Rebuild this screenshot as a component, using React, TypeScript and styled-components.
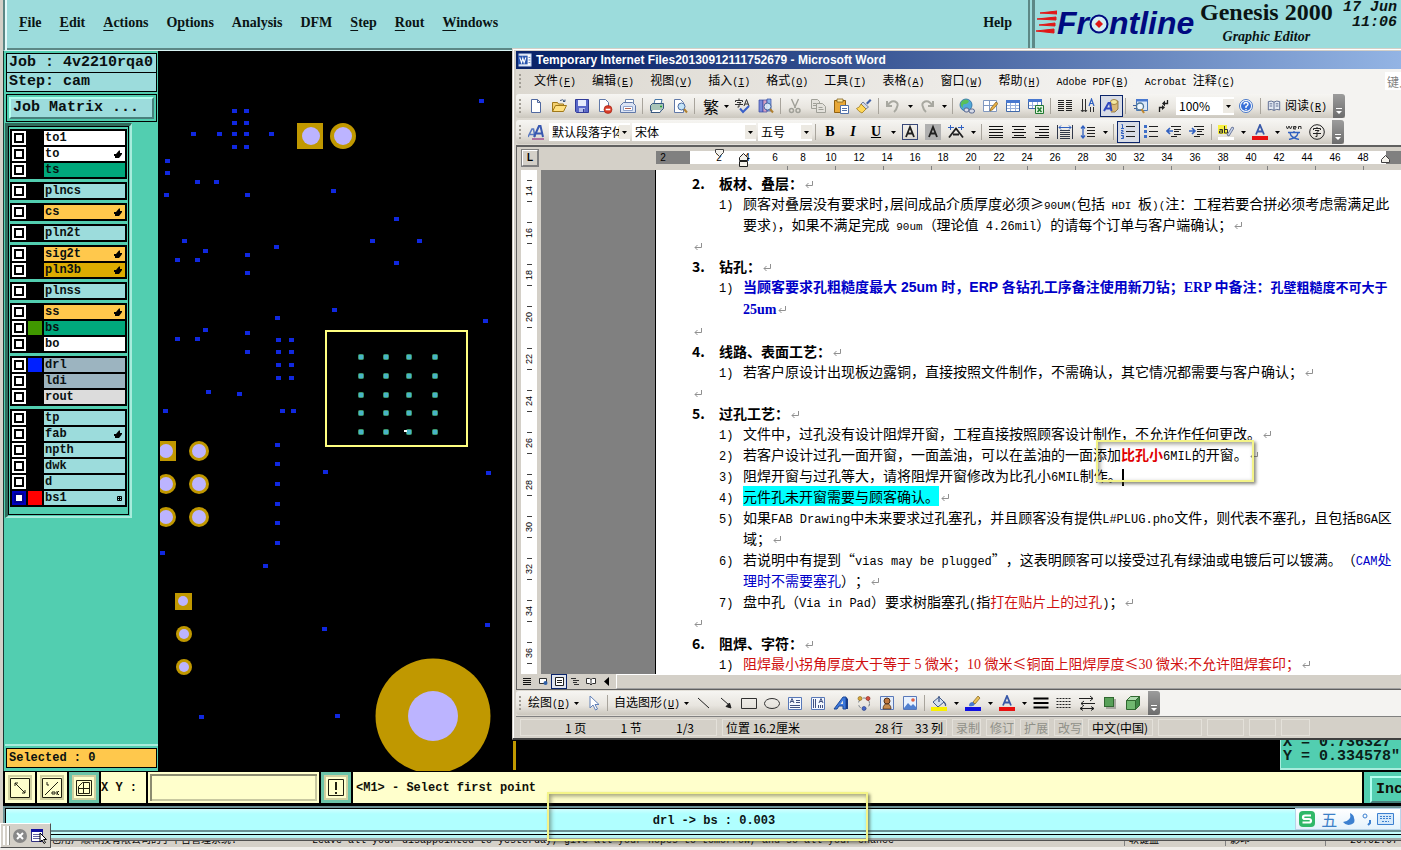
import React from "react";
import styled, { createGlobalStyle, css } from "styled-components";

const MONO = '"Liberation Mono", monospace';
const SERIF = '"Liberation Serif", "Noto Sans CJK SC", serif';
const CJK = '"Noto Sans CJK SC", sans-serif';

const teal = "#52ceb0";
const aqua = "#9cdcdc";
const cream = "#ffffcc";
const face = "#d4d0c8";

const Global = createGlobalStyle`
  * { box-sizing: border-box; }
  body { margin: 0; background: ${face}; font-family: ${CJK}; text-spacing-trim: space-all; overflow: hidden; }
  button, input, select { font: inherit; color: inherit; margin: 0; padding: 0; border: 0; border-radius: 0; background: none; }
  svg { display: block; flex: none; }
`;

/* ---------- Genesis shell ---------- */

const Shell = styled.div`
  position: relative;
  display: flex;
  flex-direction: column;
  min-height: 100vh;
  overflow: hidden;
`;

const Header = styled.header`
  display: flex;
  height: 51px;
  margin-left: 3px;
  background: ${aqua};
  border-left: 2px solid #5c8886;
  border-bottom: 1px solid #d8f4f4;
  box-shadow: inset 2px 0 #e4fafa, inset 0 -2px #5c8886;
`;

const MainMenu = styled.nav`
  flex: 1;
  display: flex;
  align-items: center;
  gap: 18px;
  padding: 0 16px 5px 14px;
  font: bold 14px/20px ${SERIF};
  color: #0a1414;
`;

const MenuItem = styled.button<{ $end?: boolean }>`
  margin-left: ${(p) => (p.$end ? "auto" : 0)};
  u {
    text-underline-offset: 3px;
  }
`;

const Brand = styled.div`
  display: flex;
  width: 373px;
  border-left: 2px solid #5c8886;
  box-shadow: inset 2px 0 ${aqua}, inset 5px 0 #5c8886;
  padding-left: 6px;
`;

const Logo = styled.div`
  display: flex;
  align-items: center;
  height: 46px;
  font: italic bold 32px/40px "Liberation Sans", sans-serif;
  color: #000a80;
`;

const Product = styled.div`
  width: 136px;
  margin-left: 4px;
  text-align: center;
  white-space: nowrap;
  color: #0a1414;
  font: bold 24px/24px ${SERIF};
  em {
    display: block;
    font-size: 14px;
    line-height: 26px;
  }
`;

const Clock = styled.time`
  margin-left: auto;
  padding-right: 4px;
  text-align: right;
  white-space: pre;
  font: italic bold 15px/15px ${MONO};
  color: #0a1414;
`;

const Main = styled.main`
  position: relative;
  flex: 1;
  display: flex;
  margin-left: 3px;
`;

const Side = styled.aside`
  display: flex;
  flex-direction: column;
  width: 155px;
  padding: 2px 1px 3px 2px;
  background: ${teal};
  border-left: 1px solid #1a3a34;
  color: #0a1010;
`;

const SideField = styled.div<{ $gold?: boolean }>`
  height: 20px;
  flex: none;
  border: 1px solid #000;
  margin-top: -1px;
  padding-left: 2px;
  white-space: pre;
  background: ${(p) => (p.$gold ? "#ffc84c" : aqua)};
  font: bold ${(p) => (p.$gold ? "12px" : "15px")} / 18px ${MONO};
  &:first-child {
    margin-top: 0;
  }
`;

const MatrixFrame = styled.div`
  margin-top: 2px;
  border: 1px solid #000;
  padding: 2px;
`;

const bevel = css`
  border: 2px solid;
  border-color: #b4fff0 #48807c #48807c #b4fff0;
`;

const MatrixButton = styled.button`
  ${bevel}
  display: block;
  width: 100%;
  height: 22px;
  padding-left: 2px;
  text-align: left;
  background: ${aqua};
  font: bold 15px/16px ${MONO};
`;

const LayerPanel = styled.div`
  display: flex;
  flex-direction: column;
  gap: 3px;
  width: 127px;
  margin: 1px 0 0 -1px;
  padding: 3px 3px 9px 2px;
  border-style: solid;
  border-width: 3px 2px 2px 3px;
  border-color: #306b5c #a8ecdc #a8ecdc #306b5c;
  outline: 1px solid #000;
  outline-offset: -4px;
`;

const LayerGroup = styled.div`
  display: flex;
  flex-direction: column;
  gap: 2px;
  padding: 2px;
  background: #000;
`;

const LayerRow = styled.label`
  display: grid;
  grid-template-columns: 14px 14px 1fr;
  gap: 2px;
  height: 14px;
`;

const LayerCheck = styled.input<{ $active?: boolean }>`
  appearance: none;
  width: 14px;
  height: 14px;
  border: 2px solid ${(p) => (p.$active ? "#0000c0" : "#fff")};
  background: #fff;
  box-shadow: inset 0 0 0 2px ${(p) => (p.$active ? "#000090" : "#000")};
`;

const Swatch = styled.span<{ $c: string }>`
  background: ${(p) => p.$c};
`;

const LayerName = styled.span<{ $c: string }>`
  display: flex;
  align-items: center;
  justify-content: space-between;
  padding: 0 3px 0 1px;
  background: ${(p) => p.$c};
  font: bold 12px/13px ${MONO};
`;

const Spacer = styled.div`
  flex: 1;
  margin: 0 -1px 3px -1px;
  border-bottom: 2px solid #a8ecdc;
`;

const Canvas = styled.section`
  flex: 1;
  position: relative;
  background: #000;
  overflow: hidden;
`;

const Board = styled.svg`
  width: 100%;
  height: 100%;
  position: absolute;
  inset: 0;
`;

const Coords = styled.output`
  position: absolute;
  right: 0;
  bottom: 1px;
  width: 121px;
  padding: 0 0 4px 2px;
  background: ${teal};
  border-left: 1px solid #a8ecdc;
  border-bottom: 2px solid #a8ecdc;
  white-space: pre;
  font: bold 15px/14px ${MONO};
  color: #0a2018;
`;

const Prompt = styled.form`
  display: flex;
  height: 35px;
  margin-left: 3px;
  padding: 1px 0 3px 2px;
  gap: 2px;
  background: #000;
  font: bold 12px/32px ${MONO};
  color: #101008;
`;

const ToolButton = styled.button<{ $on?: boolean }>`
  width: 30px;
  display: grid;
  place-items: center;
  background: ${cream};
  border: 3px solid ${(p) => (p.$on ? "#6cc4a8" : cream)};
  box-shadow: inset 0 0 0 2px #d0d0a0;
`;

const PromptLabel = styled.label`
  display: flex;
  gap: 2px;
  span {
    width: 45px;
    background: ${cream};
  }
`;

const CoordInput = styled.input`
  width: 171px;
  background: ${cream};
  border: 2px solid ${cream};
  box-shadow: inset 2px 2px #8c8c70, inset -2px -2px #c8c8a0;
  padding-left: 4px;
`;

const Message = styled.output`
  flex: 1;
  padding-left: 3px;
  background: ${cream};
`;

const IncFrame = styled.div`
  width: 37px;
  padding: 2px 0 2px 6px;
  background: ${teal};
  overflow: hidden;
`;

const IncButton = styled.button`
  ${bevel}
  width: 70px;
  height: 27px;
  padding-left: 4px;
  text-align: left;
  background: ${teal};
  font: bold 15px/23px ${MONO};
`;

const Status = styled.footer`
  position: relative;
  height: 34px;
  margin-left: 3px;
  padding-top: 2px;
  background: #6b9094;
`;

const StatusText = styled.output`
  display: block;
  height: 22px;
  margin-left: 2px;
  padding-left: 21px;
  border-top: 1px solid #000;
  border-left: 1px solid #000;
  background: linear-gradient(#d0ffff, #b0ffff 5px);
  text-align: center;
  font: bold 12px/24px ${MONO};
  color: #0a1414;
`;

const StatusEdge = styled.div`
  height: 8px;
  margin-top: 2px;
  border-top: 2px solid #c8ffff;
  background: linear-gradient(#000 1px, #b8f4f4 1px, #b8f4f4 4px, #a0a8a8 4px);
`;

const Mark = styled.div`
  position: absolute;
  z-index: 5;
  border: 2px solid #f4f488;
  box-shadow: 2px 2px 3px rgba(60, 60, 40, 0.6), inset 2px 2px 4px rgba(60, 60, 40, 0.5);
  pointer-events: none;
`;

const StatusMark = styled(Mark)`
  left: 544px;
  top: -14px;
  width: 321px;
  height: 49px;
`;

const Taskbar = styled.div`
  display: flex;
  height: 10px;
  border-top: 1px solid #505050;
  background: linear-gradient(${face} 6px, #f0eeea 6px);
  white-space: nowrap;
  font: 10px/11px ${MONO}, ${CJK};
`;

const TaskCell = styled.div<{ $w?: number; $pad?: number }>`
  ${(p) => (p.$w ? `flex: none; width: ${p.$w}px;` : "flex: 1;")}
  display: flex;
  gap: 75px;
  align-items: flex-end;
  height: 5px;
  padding-left: ${(p) => p.$pad ?? 4}px;
  overflow: hidden;
  border-left: 1px solid #808080;
  &:first-child {
    border-left: 0;
  }
`;

const Dock = styled.div`
  position: absolute;
  left: 0;
  bottom: 2px;
  z-index: 6;
  display: flex;
  align-items: center;
  gap: 3px;
  width: 51px;
  height: 25px;
  padding-left: 2px;
  background: ${face};
  border: 1px solid;
  border-color: #fff #505050 #505050 #fff;
`;

const DockGrip = styled.i`
  width: 6px;
  height: 19px;
  border: solid #fff;
  border-width: 0 2px;
  box-shadow: 1px 0 #909088;
`;

const Ime = styled.div`
  position: absolute;
  right: 0;
  bottom: 20px;
  z-index: 6;
  display: flex;
  align-items: center;
  justify-content: space-between;
  width: 106px;
  height: 22px;
  padding: 0 6px 0 2px;
  background: linear-gradient(#fff, #e4f2fc);
  border: 1px solid #b8d4e8;
  color: #3c80c8;
  font: 16px/18px ${CJK};
`;

/* ---------- Word window ---------- */

const Word = styled.section`
  position: absolute;
  left: 512px;
  right: 0;
  top: 48px;
  z-index: 3;
  background: ${face};
  border-top: 1px solid ${face};
  border-left: 1px solid ${face};
  border-bottom: 2px solid #404040;
  box-shadow: inset 1px 1px #fff;
  padding: 2px 0 0 3px;
  overflow: hidden;
  color: #000;
  font: 12px/16px ${CJK};
`;

const TitleBar = styled.h1`
  display: flex;
  align-items: center;
  gap: 4px;
  height: 18px;
  margin: 0;
  padding-left: 2px;
  background: linear-gradient(90deg, #0a246a, #0a246a 60px, #93b4e4);
  color: #fff;
  white-space: nowrap;
  font: bold 12px/18px "Liberation Sans", sans-serif;
`;

const barBg = "linear-gradient(90deg, #dcd8d0, #f4f3f1 70%)";

const WordMenu = styled.nav`
  display: flex;
  align-items: center;
  gap: 16px;
  height: 24px;
  padding-left: 3px;
  background: ${barBg};
  white-space: nowrap;
`;

const WordMenuItem = styled.button`
  flex: none;
  line-height: 16px;
`;

const Small = styled.span`
  font: 10px/14px ${MONO};
`;

const AskBox = styled.input`
  flex: none;
  width: 130px;
  height: 18px;
  margin: 0 -114px 0 auto;
  padding-left: 2px;
  background: #fff;
  &::placeholder {
    color: #808080;
    opacity: 1;
  }
`;

const BarRow = styled.div`
  display: flex;
  align-items: center;
  height: 26px;
  background: ${barBg};
`;

const Bar = styled.div`
  display: flex;
  align-items: center;
  height: 24px;
  padding-left: 3px;
  background: linear-gradient(#f6f5f2, #e8e5df 60%, #cbc7be);
  border-radius: 3px 0 0 3px;
  white-space: nowrap;
`;

const Grip = styled.i`
  width: 6px;
  height: 15px;
  background: radial-gradient(circle at 1px 1px, #a09c94 1px, transparent 1px) 0 0 / 6px 4px;
`;

const MenuGrip = styled(Grip)`
  margin-right: -7px;
`;

const IconButton = styled.button<{ $on?: boolean }>`
  flex: none;
  width: 23px;
  height: 22px;
  display: grid;
  align-items: center;
  padding-left: 3px;
  ${(p) => p.$on && "box-shadow: inset 0 0 0 1px #0a246a; background: #d8dce6;"}
`;

const Drop = styled.button`
  flex: none;
  width: 11px;
  height: 22px;
  display: grid;
  place-items: center;
`;

const Sep = styled.i`
  flex: none;
  width: 1px;
  height: 16px;
  margin: 0 3px 0 2px;
  background: #a8a49c;
`;

const TextButton = styled.button`
  display: flex;
  align-items: center;
  gap: 4px;
  height: 22px;
  padding: 0 3px;
`;

const Cap = styled.button`
  width: 12px;
  height: 24px;
  margin-left: 3px;
  display: grid;
  place-items: end center;
  padding-bottom: 3px;
  background: linear-gradient(#9c9c9c, #6c6c6c);
  border-radius: 0 3px 3px 0;
`;

const Combo = styled.label<{ $w: number }>`
  flex: none;
  display: grid;
  grid-template-columns: 1fr 11px;
  align-items: center;
  width: ${(p) => p.$w}px;
  height: 18px;
  margin: 0 1px;
  background: #fff;
  select {
    grid-area: 1 / 1 / 2 / 3;
    appearance: none;
    width: 100%;
    height: 18px;
    padding-left: 3px;
    line-height: 16px;
  }
  i {
    grid-area: 1 / 2;
    height: 14px;
    display: grid;
    place-items: center;
    background: #ece9e2;
    pointer-events: none;
  }
`;

const RulerRow = styled.div`
  display: flex;
  align-items: flex-start;
  height: 25px;
  border-top: 2px solid #606060;
  border-left: 1px solid #606060;
  font: 10px/14px "Liberation Sans", sans-serif;
`;

const TabStop = styled.button`
  width: 16px;
  height: 16px;
  margin: 3px 0 0 5px;
  border: 1px solid;
  border-color: #fff #808080 #808080 #fff;
  outline: 1px solid #808080;
  font: bold 10px/12px "Liberation Sans", sans-serif;
`;

const RulerBody = styled.div`
  flex: 1;
  margin-left: 118px;
  padding-top: 4px;
  position: relative;
`;

const RulerScale = styled.div`
  display: flex;
  height: 13px;
  background: linear-gradient(90deg, #808080 34px, #fff 34px);
  span {
    flex: none;
    width: 28px;
    text-align: center;
  }
  span:first-child {
    width: 49px;
    padding-right: 35px;
  }
  i {
    flex: 1;
    margin-left: 9px;
    background: #808080;
  }
`;

const RulerTicks = styled.div`
  height: 4px;
  margin: 2px 30px 0 131px;
  background: repeating-linear-gradient(90deg, #808080 0 1px, transparent 1px 48px);
`;

const IndentMarks = styled.svg`
  position: absolute;
  left: 56px;
  top: 1px;
`;

const RightMark = styled.svg`
  position: absolute;
  right: 10px;
  top: 8px;
`;

const Doc = styled.div`
  display: flex;
  border-left: 1px solid #606060;
`;

const VRuler = styled.div`
  display: flex;
  flex-direction: column;
  width: 16px;
  margin: 0 4px;
  background: #fff;
  font: 9px/12px "Liberation Sans", sans-serif;
  div {
    flex: 1;
    display: flex;
    flex-direction: column;
    align-items: center;
    justify-content: center;
    gap: 5px;
  }
  span {
    writing-mode: vertical-rl;
    transform: rotate(180deg);
  }
  i {
    width: 5px;
    height: 1px;
    background: #404040;
  }
`;

const Gutter = styled.div`
  width: 115px;
  background: #808080;
  border-right: 1px solid #000;
`;

const Page = styled.article`
  position: relative;
  flex: 1;
  padding: 3px 0 0 36px;
  background: #fff;
  white-space: nowrap;
  font: 14px/21px ${CJK};
`;

const Heading = styled.h2`
  display: grid;
  grid-template-columns: 27px auto;
  height: 20px;
  margin: 0;
  font: bold 14px/20px ${CJK};
`;

const Item = styled.div`
  display: grid;
  grid-template-columns: 24px auto;
  align-items: baseline;
  padding-left: 27px;
`;

const Blank = styled.p`
  height: 21px;
  margin: 0;
`;

const Latin = styled.span`
  font: 12px/14px ${MONO};
`;

const Narrow = styled.span`
  font: 11px/14px ${MONO};
`;

const Times = styled.span`
  font: 14px/14px ${SERIF};
`;

const HalfWidth = styled.span`
  font-feature-settings: "halt";
`;

const Ink = styled.span<{ $c: string; $bold?: boolean }>`
  color: ${(p) => p.$c};
  font-weight: ${(p) => (p.$bold ? "bold" : "inherit")};
`;

const ArialBold = styled.span`
  color: #0000c8;
  font-family: "Liberation Sans", ${CJK};
  font-weight: bold;
`;

const SerifBold = styled.span`
  color: #0000c8;
  font-family: ${SERIF};
  font-weight: bold;
`;

const Script = styled.span`
  font-size: 13px;
  line-height: 14px;
`;

const Lit = styled.span`
  background: #00ffff;
`;

const Caret = styled.i`
  display: inline-block;
  width: 2px;
  height: 17px;
  vertical-align: middle;
  background: #000;
`;

const DocMark = styled(Mark)`
  left: 440px;
  top: 270px;
  width: 158px;
  height: 42px;
`;

const Ret = styled.svg`
  display: inline-block;
  margin-left: 2px;
`;

const ViewRow = styled.div`
  display: flex;
  align-items: center;
  height: 16px;
  border-left: 1px solid #606060;
  border-bottom: 1px solid #606060;
  padding-left: 2px;
`;

const ViewButton = styled.button<{ $on?: boolean }>`
  width: 16px;
  height: 15px;
  display: grid;
  align-items: center;
  padding-left: 3px;
  ${(p) => p.$on && "box-shadow: inset 0 0 0 1px #0a246a; background: #e0e4ee;"}
`;

const ScrollThumb = styled.div`
  flex: 1;
  height: 15px;
  margin-left: 1px;
  border: 1px solid;
  border-color: #fff ${face} #a0a0a0 #fff;
`;

const WordStatus = styled.div`
  display: flex;
  align-items: center;
  gap: 5px;
  height: 22px;
  padding-left: 4px;
  border-top: 1px solid #808080;
`;

const StatusCell = styled.div<{ $w: number; $off?: boolean }>`
  display: flex;
  flex: none;
  width: ${(p) => p.$w}px;
  height: 17px;
  justify-content: space-between;
  padding: 0 3px;
  border: 1px solid #e4e1da;
  line-height: 15px;
  white-space: nowrap;
  color: ${(p) => (p.$off ? "#909088" : "#000")};
`;

const PageCell = styled(StatusCell)`
  padding: 0 22px 0 44px;
`;

/* ---------- drawings ---------- */

const G: Record<string, React.ReactNode> = {
  word: (<><rect x="1" y="1" width="14" height="14" fill="#fff" stroke="#9cb4e0" /><rect x="0" y="3" width="11" height="10" fill="#2a56b0" /><path d="M2 5l2 6 1.500-5 1.500 5 2-6" stroke="#fff" fill="none" strokeWidth="1.300" /><path d="M12 5h2M12 8h2M12 11h2" stroke="#5070b0" /></>),
  new: <path d="M3.500 1.500h6l3 3v10h-9zM9.500 1.500v3h3" fill="#fff" stroke="#5068a0" />,
  open: (<><path d="M1.500 13.500v-9h5l1 1.500h5v2" fill="#f4d070" stroke="#a07818" /><path d="M1.500 13.500l3-6h11l-3 6z" fill="#ffe080" stroke="#a07818" /><path d="M9 2.500q3-2 5 1m0-2v2h-2" stroke="#405880" fill="none" /></>),
  save: (<><path d="M1.500 1.500h13v13h-12l-1-1z" fill="#5a68c8" stroke="#303a98" /><path d="M4 2h8v6H4z" fill="#e8ecfc" /><path d="M5 10h6v4H5z" fill="#b8c0ec" /><path d="M9 11h1.500v3H9z" fill="#303a98" /></>),
  perm: (<><path d="M2.500 1.500h6l3 3v9h-9z" fill="#fff" stroke="#6078a8" /><circle cx="11" cy="11.500" r="4" fill="#d83c28" stroke="#a02010" strokeWidth=".6" /><path d="M8.700 11.500h4.600" stroke="#fff" strokeWidth="1.600" /></>),
  mail: (<><path d="M5.500 5V1.500h8V9" fill="#fff" stroke="#7088b0" /><path d="M.5 7.500l3-3h9l3 3v7H.5z" fill="#dce4f4" stroke="#6078a8" /><path d="M3.500 8.500h9v4h-9z" fill="#fff" stroke="#90a4cc" /><path d="M5 10.500h6" stroke="#b06050" /></>),
  print: (<><path d="M5 6l1-4.500h7L12 6" fill="#fff" stroke="#4878a8" /><path d="M1.500 7.500l2-2h11v5l-2 2h-11z" fill="#a8c4b8" stroke="#385880" /><path d="M3 12l-1 2.500h9l1.500-2.500" fill="#fff" stroke="#385880" /><path d="M11 8.500h2" stroke="#20a030" strokeWidth="1.500" /></>),
  preview: (<><path d="M2.500 1.500h6l3 3v10h-9z" fill="#fff" stroke="#6078a8" /><circle cx="9.500" cy="8.500" r="3.500" fill="#c4e4f8" stroke="#4868a0" /><path d="M12 11l3 3.500" stroke="#b08030" strokeWidth="2" /></>),
  spell: (<><path d="M.5 4V2.500h7V4M4 .500v2M2 4.500h4L4 6.500V9H2.500M0 6.500h8M9 8l2.500-6.500L14 8M10 6h3" stroke="#303030" fill="none" /><path d="M5 10.500l3 3.500 6-6" stroke="#3a60c8" fill="none" strokeWidth="2" /></>),
  research: (<><path d="M1 2h4v12H1z" fill="#7888d8" stroke="#3848a0" strokeWidth=".7" /><path d="M5 2h4v12H5z" fill="#d8a0c0" stroke="#3848a0" strokeWidth=".7" /><path d="M9 1h4v12H9z" fill="#88b0e8" stroke="#3848a0" strokeWidth=".7" /><circle cx="9.500" cy="8.500" r="3.500" fill="#e8f4fcd0" stroke="#4868a0" /><path d="M12 11l3 3.500" stroke="#b08030" strokeWidth="2" /></>),
  cut: (<><path d="M4.500 1l4 9M11.500 1l-4 9" stroke="#a0a098" fill="none" strokeWidth="1.400" /><circle cx="4.500" cy="12.500" r="2" fill="none" stroke="#a0a098" strokeWidth="1.500" /><circle cx="11" cy="12.500" r="2" fill="none" stroke="#a0a098" strokeWidth="1.500" /></>),
  copy: (<><path d="M1.500 1.500h6l2 2v7h-8z" fill="#e4e2dc" stroke="#a0a098" /><path d="M6.500 5.500h6l3 3v6h-9z" fill="#e4e2dc" stroke="#a0a098" /><path d="M8.500 9.500h4M8.500 11.500h5M3 5.500h3M3 7.500h3" stroke="#a0a098" /></>),
  paste: (<><path d="M1.500 2.500h11v12h-11z" fill="#e8a838" stroke="#906010" /><path d="M4 1h6v3H4z" fill="#ffe8a0" stroke="#806020" strokeWidth=".8" /><path d="M7.500 7.500h8v8h-8z" fill="#fff" stroke="#5070a8" /><path d="M9 10.500h5M9 12.500h5" stroke="#5070a8" /></>),
  brush: (<><path d="M10 5l4-4 1.500 1.500-4 4z" fill="#4060a8" /><path d="M7 4l5.500 5-2.500 2-5-5z" fill="#d0d8e8" stroke="#485880" strokeWidth=".7" /><path d="M5 6l5 5-4 4q-3-1-5.500-4.500Q4 9.500 5 6z" fill="#ffd858" stroke="#a07818" strokeWidth=".8" /></>),
  undo: <path d="M2 3v5h5M2.500 7.500Q6 2 10 3.500T12 9q-.5 3-3 5" stroke="#a8a8a0" fill="none" strokeWidth="2" />,
  redo: <path d="M14 3v5H9M13.500 7.500Q10 2 6 3.500T4 9q.5 3 3 5" stroke="#a8a8a0" fill="none" strokeWidth="2" />,
  link: (<><circle cx="7" cy="7" r="6" fill="#50a8d8" stroke="#2868a0" strokeWidth=".8" /><path d="M3 3q4-3 7 0-1 3-4 3T4 10Q0 7 3 3z" fill="#58c058" /><rect x="5" y="10" width="5" height="4" rx="2" fill="#d8dce8" stroke="#586890" /><rect x="10" y="11" width="5.500" height="4" rx="2" fill="#d8dce8" stroke="#586890" /></>),
  tables: (<><path d="M1.500 2.500h13v11h-13zM1.500 7.500h13M7.500 2.500v11" fill="#fff" stroke="#8098c0" /><path d="M8 13l1-3 5-6 2 1.500-5 6z" fill="#e8b048" stroke="#806018" strokeWidth=".7" /></>),
  grid: (<><path d="M1.500 2.500h13v11h-13z" fill="#fff" stroke="#4068a8" /><path d="M1 2h14v3H1z" fill="#4878d0" /><path d="M2 7.500h12M2 10.500h12M5.500 5v8M10.500 5v8" stroke="#98b0dc" /></>),
  excel: (<><path d="M.5 1.500h13v9H.5z" fill="#fff" stroke="#4068a8" /><path d="M0 1h14v3H0z" fill="#4878d0" /><path d="M4.500 4v6M9.500 4v6M1 7.500h12" stroke="#98b0dc" /><path d="M7.500 7.500h8v8h-8z" fill="#e4f4e0" stroke="#207830" /><path d="M9.500 9.500l4 4.500M13.500 9.500l-4 4.500" stroke="#208030" strokeWidth="1.600" /></>),
  columns: <path d="M1 2.500h6M1 4.500h6M1 6.500h6M1 8.500h6M1 10.500h6M1 12.500h6M9 2.500h6M9 4.500h6M9 6.500h6M9 8.500h6M9 10.500h6M9 12.500h6" stroke="#202020" />,
  textdir: (<><path d="M2.500 1v12M5.500 1v12M10.500 9v5M13.500 9v5M1 12l1.500 2L4 12M4.500 12l1 2 1.500-2" stroke="#303030" fill="none" /><path d="M9 8l2.500-7L14 8M10 5.500h3" stroke="#3060c0" fill="none" strokeWidth="1.200" /></>),
  drawing: (<><path d="M8 8V5l2-2h5v8l-3 3H8" fill="#d8b878" stroke="#806838" strokeWidth=".8" /><ellipse cx="11" cy="4" rx="3.500" ry="2.500" fill="#f4e8a0" stroke="#907030" strokeWidth=".8" /><path d="M1 13L5.500 5H7l1.500 8M3 10.500h5" stroke="#3048c0" fill="none" strokeWidth="2" /></>),
  map: (<><path d="M4.500 1.500h11v11h-11z" fill="#dce8f8" stroke="#4878b8" /><path d="M4 1h12v2.500H4z" fill="#4878d0" /><path d="M1 7.500h4M2 10.500h3" stroke="#4060a0" /><circle cx="8" cy="8.500" r="3.500" fill="#f0f8ff" stroke="#507898" strokeWidth="1.300" /><path d="M9.500 11l2.500 4" stroke="#c08830" strokeWidth="2" /></>),
  para: (<><path d="M12.500 2v3.500H9M8 9.500H4.500V14" stroke="#202020" fill="none" strokeWidth="1.300" /><path d="M10 2.500v6L7 5.500zM7 7v5l3-2.500z" fill="#202020" /></>),
  help: (<><circle cx="8" cy="8" r="6.500" fill="#fff" stroke="#4878c8" /><circle cx="8" cy="8" r="5" fill="#3870d8" /><path d="M6 6.500Q6 4.500 8 4.500t2 2q0 1-2 2V10M8 11v1.300" stroke="#fff" fill="none" strokeWidth="1.400" /></>),
  book: <path d="M8 3.500Q5 1.500 1.500 3v9.500Q5 11 8 13q3-2 6.500-.5V3Q11 1.500 8 3.500zV13M3 5.500h3M3 8h3M10 5.500h3M10 8h3" fill="#e4eaf4" stroke="#506088" />,
  styles: (<><path d="M0 13l4-8h1.500L7 13M2 10.500h4" stroke="#5878c0" fill="none" strokeWidth="1.600" /><path d="M6 13L11 2h1.500L15 13M8 9.500h6" stroke="#3858b0" fill="none" strokeWidth="2" /><path d="M4 15h12" stroke="#a05090" strokeWidth="1.500" /></>),
  boxA: (<><rect x=".5" y=".5" width="15" height="15" fill="none" stroke="#384878" /><path d="M4 13L8 3l4 10M5.500 9.500h5" stroke="#202020" fill="none" strokeWidth="1.800" /></>),
  shadeA: (<><rect width="16" height="16" fill="#b0b0b0" /><path d="M4 13L8 3l4 10M5.500 9.500h5" stroke="#202020" fill="none" strokeWidth="1.800" /></>),
  scale: (<><path d="M1 13.500l7-9 7 9M5 10.500h6" stroke="#202020" fill="none" strokeWidth="1.800" /><path d="M0 3.500h6M10 3.500h6M2.500 1v5M13.500 1v5" stroke="#3060c0" /></>),
  justify: <path d="M1 2.500h14M1 5.500h14M1 8.500h14M1 11.500h14M1 13.500h14" stroke="#101010" />,
  center: <path d="M1 2.500h14M3 5.500h10M1 8.500h14M3 11.500h10M1 13.500h14" stroke="#101010" />,
  right: <path d="M1 2.500h14M5 5.500h10M1 8.500h14M5 11.500h10M1 13.500h14" stroke="#101010" />,
  spread: (<><path d="M.5 1v14M15.500 1v14M3 6.500h10M3 8.500h10M3 10.500h10M3 12.500h10M3 14.500h10" stroke="#303848" /><path d="M2 3.500h12M4 1.500l-2 2 2 2M12 1.500l2 2-2 2" stroke="#3060c0" fill="none" /></>),
  spacing: (<><path d="M7 3.500h8M7 6.500h8M7 9.500h8M7 12.500h8" stroke="#202020" /><path d="M3 2v12M1 4.500L3 2l2 2.500M1 11.500L3 14l2-2.500" stroke="#3060c0" fill="none" strokeWidth="1.300" /></>),
  numbers: (<><path d="M6 2.500h9M6 7.500h9M6 12.500h9" stroke="#202020" /><path d="M1.500.5h1v3.500M1 4.500h3M1 6.500h2v1.500H1.500v1.500H4M1 11.500h2.500v3H1M2 13h1.500" stroke="#3060c0" fill="none" /></>),
  bullets: (<><path d="M6 2.500h9M6 7.500h9M6 12.500h9" stroke="#202020" /><path d="M1 1h3v3H1zM1 6h3v3H1zM1 11h3v3H1z" fill="#4070c8" /></>),
  outdent: (<><path d="M5 2.500h10M8 5.500h7M8 7.500h5M8 10.500h7M5 12.500h6" stroke="#202020" /><path d="M7 7H1M4 4L1 7l3 3" stroke="#3060c0" fill="none" strokeWidth="1.600" /></>),
  indent: (<><path d="M5 2.500h10M8 5.500h7M8 7.500h5M8 10.500h7M5 12.500h6" stroke="#202020" /><path d="M0 7h6M3 4l3 3-3 3" stroke="#3060c0" fill="none" strokeWidth="1.600" /></>),
  marker: (<><rect x="0" y="1" width="9" height="9" fill="#f8f040" /><path d="M1.500 5.500h3V9h-3V7h3M6.500 2v7h3V5.500h-3" stroke="#303030" fill="none" /><path d="M9 11l5-8 2 1-5 8z" fill="#c8d4e8" stroke="#405080" strokeWidth=".7" /><rect x="0" y="13" width="16" height="3" fill="#fff" /></>),
  fontcolor: (<><path d="M4 10.500L8 1l4 9.500M5.500 7.500h5" stroke="#3858a8" fill="none" strokeWidth="1.800" /><rect x="0" y="12" width="16" height="4" fill="#e81010" /></>),
  phonetic: (<><path d="M0 2l1.500 3L3 2l1.500 3L6 2M7 4h3V2.500H7.500V5h2.500M12.500 5V2.500h2.500V5" stroke="#303030" fill="none" /><path d="M2 8.500h12M8 7v1.500M4 9q1 5 9 6.500M12 9q-1 5-9 6.500" stroke="#3060c0" fill="none" strokeWidth="1.300" /></>),
  enclose: (<><circle cx="8" cy="8" r="7.300" fill="none" stroke="#202020" /><path d="M4.500 6V4.500h7V6M8 3v1.500M6 6.500h4L8 8.500v4H6.500M4 9.500h8" stroke="#202020" fill="none" /></>),
  pointer: <path d="M5 1v12l3-3 2.500 5 2-1L10 9.500h4z" fill="#fff" stroke="#6080b8" />,
  line: <path d="M3 3l11 10" stroke="#202020" />,
  arrow: <path d="M3 3l8 7M13 13l-5-1.500L11.500 8z" stroke="#202020" fill="#202020" />,
  rect: <path d="M.5 3.500h15v10H.5z" fill="none" stroke="#303030" />,
  oval: <ellipse cx="8" cy="8.500" rx="7.500" ry="5" fill="none" stroke="#303030" />,
  textbox: (<><path d="M1.500 2.500h13v12h-13z" fill="#f4f8ff" stroke="#5878b8" /><path d="M3 8l2-4.500L7 8M4 6.500h2M9 5.500h4M9 7.500h4M3 10.500h10M3 12.500h10" stroke="#405080" fill="none" /></>),
  vtext: (<><path d="M1.500 2.500h13v12h-13z" fill="#f4f8ff" stroke="#5878b8" /><path d="M9 8l2-4.500L13 8M10 6.500h2M3.500 4v9M5.500 4v9M8.500 10v3M10.500 10v3M12.500 10v3" stroke="#405080" fill="none" /></>),
  wordart: (<><path d="M1 14L10 2h3v12h-3v-3H6l-2 3z" fill="#3c78dc" stroke="#1c4898" /><path d="M7.500 9H10V5.500z" fill="#e8e5df" /><path d="M13 2l2 2v10h-2" fill="#183c88" /></>),
  diagram: (<><circle cx="8" cy="8.500" r="5.500" fill="none" stroke="#707880" strokeDasharray="3 3" /><circle cx="4" cy="3.500" r="2" fill="#d8a838" stroke="#806018" strokeWidth=".6" /><circle cx="12" cy="3.500" r="2" fill="#d85040" stroke="#802018" strokeWidth=".6" /><circle cx="8" cy="13.500" r="2" fill="#4868c8" stroke="#203880" strokeWidth=".6" /></>),
  person: (<><path d="M1.500 1.500h13v13h-13z" fill="#e4ecf8" stroke="#5878b8" /><circle cx="8" cy="6" r="3" fill="#c07840" stroke="#503018" /><path d="M4 14q0-5 4-5t4 5z" fill="#c88c50" stroke="#503018" strokeWidth=".8" /></>),
  image: (<><path d="M1.500 1.500h13v13h-13z" fill="#e8f2ff" stroke="#5878b8" /><path d="M2 13l4-5 3 3 2-2 3 3v2H2z" fill="#5080d0" /><circle cx="11" cy="5" r="1.800" fill="#e06040" /></>),
  fill: (<><path d="M2 7l6-5 5 5-6 5z" fill="#d4e0f0" stroke="#405888" /><path d="M8 1v6M13 7q2 2 1.500 4" stroke="#405888" fill="none" strokeWidth="1.300" /><rect x="0" y="12" width="16" height="4" fill="#f8f000" /></>),
  linecolor: (<><path d="M4 11q0-4 4-4l2 2q-1 3-6 2z" fill="#4878d0" /><path d="M8 7l5-6 2 2-5 6z" fill="#e8c058" stroke="#806018" strokeWidth=".7" /><rect x="0" y="12" width="16" height="4" fill="#1010e0" /></>),
  weights: <path d="M.5 3.500h15M.5 8h15M.5 12.500h15" stroke="#000" strokeWidth="2" />,
  dashes: <path d="M.5 3.500h15M.5 6.500h15M.5 9.500h15M.5 12.500h15" stroke="#202020" strokeDasharray="2 1" />,
  arrows: <path d="M0 3.500h14M11 1l3 2.500L11 6M2 8.500h14M5 6L2 8.500 5 11M1 13.500h14M4 11.500l-3 2 3 2M12 11.500l3 2-3 2" stroke="#202020" fill="none" />,
  shadow: (<><rect x="4" y="4" width="10" height="10" fill="#a8a8a0" /><rect x="2.500" y="2.500" width="9" height="9" fill="#58a058" stroke="#306830" /></>),
  cube: (<><path d="M1.500 5.500h9v9h-9z" fill="#70b870" stroke="#306830" /><path d="M1.500 5.500l4-4h9l-4 4z" fill="#b0dcb0" stroke="#306830" /><path d="M10.500 5.500l4-4v9l-4 4z" fill="#408848" stroke="#306830" /></>),
};

const views: [string, React.ReactNode, boolean?][] = [
  ["普通视图", <path d="M1 1.500h8M1 3.500h8M1 5.500h8M1 7.500h8" stroke="#101010" />],
  ["Web 版式", <><path d="M1.500 1.500h7v5h-7z" fill="#fff" stroke="#303030" /><circle cx="7.500" cy="6" r="2" fill="#3060a8" /></>],
  ["页面视图", <path d="M1.500.5h8v8h-8zM3 3.500h5M3 5.500h5" fill="#fff" stroke="#202020" />, true],
  ["大纲视图", <path d="M1 1.500h5M3 3.500h6M3 5.500h4M4 7.500h5" stroke="#303030" />],
  ["阅读版式", <path d="M.5 1.500h3l1.500 1 1.500-1h3v5h-3L5 8 3.500 6.500h-3zM5 2.500V8" fill="#fff" stroke="#303030" />],
  ["向左滚动", <path d="M7 0v9L2 4.500z" fill="#000" />],
];

const Icon = ({ n, s = 16 }: { n: string; s?: number }) => (
  <svg width={s} height={s} viewBox="0 0 16 16" aria-hidden="true">{G[n]}</svg>
);

const Tri = () => (
  <svg width="5" height="4" aria-hidden="true"><path d="M0 1h5L2.500 4z" fill="#000" /></svg>
);

const Return = () => (
  <Ret width="8" height="8" aria-hidden="true">
    <path d="M7.500 0v4.500H1M3.500 2L1 4.500 3.500 7" stroke="#909090" fill="none" />
  </Ret>
);

const Hand = () => (
  <svg width="8" height="8" aria-hidden="true"><path d="M0 4h2l3-3.500h1V3h2v1L7 5.500 5 8H1V6H0z" fill="#000" /></svg>
);

const tools = (names: string) =>
  names.split(" ").map((n, i) => {
    if (n === "|") return <Sep key={i} />;
    if (n === "v") return <Drop key={i} type="button" aria-label="more"><Tri /></Drop>;
    const on = n.endsWith("*");
    const name = on ? n.slice(0, -1) : n;
    return <IconButton key={i} type="button" $on={on} aria-label={name}><Icon n={name} /></IconButton>;
  });

const EndCap = () => (
  <Cap type="button" aria-label="toolbar options">
    <svg width="8" height="8" aria-hidden="true"><path d="M1 1h6v1H1zM1 4h6L4 7z" fill="#fff" /></svg>
  </Cap>
);

const Letter = styled.b`
  width: 16px;
  text-align: center;
  font: bold 14px/16px ${SERIF};
`;

const Traditional = styled.span`
  font-size: 16px;
  line-height: 18px;
`;

/* ---------- data ---------- */

type Layer = [name: string, color: string, mark?: "hand" | "grid", swatch?: string];
const gold = "#ffc84c";
const layers: Layer[][] = [
  [["to1", "#fff"], ["to", "#fff", "hand"], ["ts", "#00a87c"]],
  [["plncs", aqua]],
  [["cs", gold, "hand"]],
  [["pln2t", aqua]],
  [["sig2t", gold, "hand"], ["pln3b", "#dcac00", "hand"]],
  [["plnss", aqua]],
  [["ss", gold, "hand"], ["bs", "#00a87c", undefined, "#409800"], ["bo", "#fff"]],
  [["drl", "#9cb4c0", undefined, "#0020ff"], ["ldi", "#9cb4c0"], ["rout", "#dcdcdc"]],
  [["tp", aqua], ["fab", aqua, "hand"], ["npth", aqua], ["dwk", aqua], ["d", aqua], ["bs1", aqua, "grid", "#ff0000"]],
];

const vias = [
  [481, 101], [234, 111], [246, 111], [234, 123], [246, 123], [193, 134], [219, 134], [234, 134], [246, 134], [271, 134],
  [234, 147], [246, 147], [167, 161], [167, 173], [197, 182], [216, 182], [166, 195], [247, 195], [333, 191], [396, 219],
  [372, 241], [419, 241], [396, 263], [184, 241], [205, 251], [177, 260], [197, 260], [276, 247], [247, 255], [247, 273],
  [334, 310], [485, 321], [277, 318], [205, 330], [177, 339], [197, 339], [247, 333], [247, 352], [278, 340], [291, 340],
  [278, 352], [291, 352], [278, 365], [291, 365], [278, 378], [291, 378], [208, 392], [239, 394], [165, 411], [282, 411],
  [293, 411], [277, 445], [277, 464], [277, 484], [277, 504], [277, 523], [277, 543], [325, 472], [488, 473], [162, 553],
  [265, 566], [324, 629], [487, 625], [201, 717], [337, 716],
];

const roundPads = [
  [343, 136, 13, 9], [199, 451, 10, 7], [166, 484, 10, 7], [199, 484, 10, 7], [166, 517, 10, 7], [199, 517, 10, 7],
  [184, 634, 8, 5], [184, 667, 8, 5], [433, 716, 57.5, 25],
];
const squarePads = [[297, 123, 26, 9, 311, 136], [156, 441, 20, 7, 166, 451], [175, 593, 17, 5, 183, 601]];

const PadGold = "#c09800";
const Hole = "#bcb4ff";

const Pcb = () => (
  <Board role="img" aria-label="PCB layout">
    <g transform="translate(-158 -51)">
      {vias.map(([x, y], i) => <rect key={i} x={x - 2} y={y - 2} width="5" height="4" fill="#1028e0" />)}
      {squarePads.map(([x, y, s, r, cx, cy]) => (
        <g key={x}>
          <rect x={x} y={y} width={s} height={s} fill={PadGold} />
          <circle cx={cx} cy={cy} r={r} fill={Hole} />
        </g>
      ))}
      {roundPads.map(([x, y, r, h]) => (
        <g key={`${x}-${y}`}>
          <circle cx={x} cy={y} r={r} fill={PadGold} />
          <circle cx={x} cy={y} r={h} fill={Hole} />
        </g>
      ))}
      <rect x="156" y="430" width="4" height="110" fill="#000" />
      {[357, 376, 395, 413, 432].map((y) =>
        [361, 386, 409, 435].map((x) => (
          <rect key={`${x}-${y}`} x={x - 2.5} y={y - 2.5} width="5" height="5" rx="1" fill="#48b4c8" stroke="#3c9868" />
        ))
      )}
      <rect x="404" y="430" width="3" height="2" fill="#fff" />
      <rect x="326" y="331" width="141" height="115" fill="none" stroke="#ffff80" strokeWidth="2" />
      <rect x="513" y="741" width="3" height="29" fill={PadGold} />
    </g>
  </Board>
);

const mainMenu: [string, string, string][] = [
  ["", "F", "ile"], ["", "E", "dit"], ["", "A", "ctions"], ["O", "p", "tions"], ["Analysis", "", ""],
  ["DFM", "", ""], ["", "S", "tep"], ["", "R", "out"], ["", "W", "indows"],
];

const wordMenu: [string, string, string][] = [
  ["文件", "", "F"], ["编辑", "", "E"], ["视图", "", "V"], ["插入", "", "I"], ["格式", "", "O"], ["工具", "", "T"],
  ["表格", "", "A"], ["窗口", "", "W"], ["帮助", "", "H"], ["", "Adobe PDF", "B"], ["注释", "Acrobat ", "C"],
];

const Key = ({ k }: { k: string }) => <Small>(<u>{k}</u>)</Small>;

const Select = ({ w, label, value }: { w: number; label: string; value: string }) => (
  <Combo $w={w}>
    <select aria-label={label} defaultValue={value}><option>{value}</option></select>
    <i><Tri /></i>
  </Combo>
);

const Document = () => (
  <Page>
    <Heading><span>2.</span><span>板材、叠层：<Return /></span></Heading>
    <Item><Latin>1)</Latin><div>
      顾客对叠层没有要求时<HalfWidth>，</HalfWidth>层间成品介质厚度必须≥<Narrow>90UM(</Narrow>包括<Narrow> HDI </Narrow>板<Narrow>)(</Narrow>注：工程若要合拼必须考虑需满足此<br />
      要求<Narrow>)</Narrow>，如果不满足完成<Narrow> 90um</Narrow>（理论值<Latin> 4.26mil</Latin>）的请每个订单与客户端确认；<Return />
    </div></Item>
    <Blank><Return /></Blank>
    <Heading><span>3.</span><span>钻孔：<Return /></span></Heading>
    <Item><Latin>1)</Latin><div>
      <ArialBold>当顾客要求孔粗糙度最大 25um 时，ERP 各钻孔工序备注使用新刀钻；</ArialBold><SerifBold>ERP 中备注：<Script>孔壁粗糙度不可大于</Script><br />25um</SerifBold><Return />
    </div></Item>
    <Blank><Return /></Blank>
    <Heading><span>4.</span><span>线路、表面工艺：<Return /></span></Heading>
    <Item><Latin>1)</Latin><div>若客户原设计出现板边露铜，直接按照文件制作，不需确认，其它情况都需要与客户确认；<Return /></div></Item>
    <Blank><Return /></Blank>
    <Heading><span>5.</span><span>过孔工艺：<Return /></span></Heading>
    <Item><Latin>1)</Latin><div>文件中，过孔没有设计阻焊开窗，工程直接按照顾客设计制作，不允许作任何更改。<Return /></div></Item>
    <Item><Latin>2)</Latin><div>若客户设计过孔一面开窗，一面盖油，可以在盖油的一面添加<Ink $c="#e00000" $bold>比孔小</Ink><Latin>6MIL</Latin>的开窗。<Return /></div></Item>
    <Item><Latin>3)</Latin><div>阻焊开窗与过孔等大，请将阻焊开窗修改为比孔小<Latin>6MIL</Latin>制作。<Caret /></div></Item>
    <Item><Latin>4)</Latin><div><Lit>元件孔未开窗需要与顾客确认。</Lit><Return /></div></Item>
    <Item><Latin>5)</Latin><div>
      如果<Latin>FAB Drawing</Latin>中未来要求过孔塞孔，并且顾客没有提供<Latin>L#PLUG.pho</Latin>文件，则代表不塞孔，且包括<Latin>BGA</Latin>区<br />域；<Return />
    </div></Item>
    <Item><Latin>6)</Latin><div>
      若说明中有提到“<Latin>vias may be plugged</Latin>”，这表明顾客可以接受过孔有绿油或电镀后可以镀满。（<Ink $c="#0000c8"><Latin>CAM</Latin>处<br />理时不需要塞孔</Ink>）；<Return />
    </div></Item>
    <Item><Latin>7)</Latin><div>盘中孔（<Latin>Via in Pad</Latin>）要求树脂塞孔<Latin>(</Latin>指<Ink $c="#d01010">打在贴片上的过孔</Ink><Latin>)</Latin>；<Return /></div></Item>
    <Blank><Return /></Blank>
    <Heading><span>6.</span><span>阻焊、字符：<Return /></span></Heading>
    <Item><Latin>1)</Latin><div><Ink $c="#d01010">
      阻焊最小拐角厚度大于等于<Times> 5 </Times>微米；<Times>10 </Times>微米≤铜面上阻焊厚度≤<Times>30 </Times>微米<Times>;</Times>不允许阻焊套印；</Ink><Return />
    </div></Item>
    <DocMark />
  </Page>
);

const WordWindow = () => (
  <Word aria-label="Microsoft Word">
    <TitleBar><Icon n="word" s={14} />Temporary Internet Files20130912111752679 - Microsoft Word</TitleBar>
    <WordMenu>
      <MenuGrip />
      {wordMenu.map(([zh, en, k]) => (
        <WordMenuItem key={k} type="button"><Small>{en}</Small>{zh}<Key k={k} /></WordMenuItem>
      ))}
      <AskBox aria-label="键入需要帮助的问题" placeholder="键入需要帮助的问题" />
    </WordMenu>
    <BarRow>
      <Bar>
        <Grip />
        {tools("new open save perm mail | print preview |")}
        <IconButton type="button"><Traditional>繁</Traditional></IconButton>
        {tools("v spell research | cut copy paste brush | undo v redo v | link tables grid excel | columns textdir drawing* | map para")}
        <Select w={58} label="显示比例" value="100%" />
        {tools("help |")}
        <TextButton type="button"><Icon n="book" s={14} /><span>阅读<Key k="R" /></span></TextButton>
        <EndCap />
      </Bar>
    </BarRow>
    <BarRow>
      <Bar>
        <Grip />
        {tools("styles")}
        <Select w={81} label="样式" value="默认段落字体" />
        <Select w={124} label="字体" value="宋体" />
        <Select w={54} label="字号" value="五号" />
        <Sep />
        <IconButton type="button"><Letter>B</Letter></IconButton>
        <IconButton type="button"><Letter><i>I</i></Letter></IconButton>
        <IconButton type="button"><Letter><u>U</u></Letter></IconButton>
        {tools("v boxA shadeA scale v | justify center right spread spacing v | numbers* bullets outdent indent | marker v fontcolor v phonetic enclose")}
        <EndCap />
      </Bar>
    </BarRow>
    <RulerRow>
      <TabStop type="button">L</TabStop>
      <RulerBody>
        <RulerScale>
          <span>2</span>
          {Array.from({ length: 24 }, (_, i) => <span key={i}>{i * 2 + 2}</span>)}
          <i />
        </RulerScale>
        <RulerTicks />
        <IndentMarks width="40" height="20" aria-hidden="true">
          <path d="M3.500 1.500h8v3l-4 4-4-4z" fill="#f4f2ec" stroke="#404040" />
          <path d="M27.500 12.500v-3l4-4 4 4v3zM27.500 13.500h8v5h-8z" fill="#f4f2ec" stroke="#202020" />
        </IndentMarks>
        <RightMark width="10" height="8" aria-hidden="true">
          <path d="M.5 7.500v-3l4-4 4 4v3z" fill="#f4f2ec" stroke="#404040" />
        </RightMark>
      </RulerBody>
    </RulerRow>
    <Doc>
      <VRuler>
        {Array.from({ length: 12 }, (_, i) => <div key={i}><i /><span>{14 + i * 2}</span><i /></div>)}
      </VRuler>
      <Gutter />
      <Document />
    </Doc>
    <ViewRow>
      {views.map(([name, art, on]) => (
        <ViewButton key={name} type="button" aria-label={name} $on={on}>
          <svg width="10" height="9" aria-hidden="true">{art}</svg>
        </ViewButton>
      ))}
      <ScrollThumb />
    </ViewRow>
    <BarRow>
      <Bar>
        <Grip />
        <TextButton type="button"><span>绘图<Key k="D" /></span><Tri /></TextButton>
        {tools("pointer |")}
        <TextButton type="button"><span>自选图形<Key k="U" /></span><Tri /></TextButton>
        {tools("line arrow rect oval textbox vtext wordart diagram person image | fill v linecolor v fontcolor v weights dashes arrows shadow cube")}
        <EndCap />
      </Bar>
    </BarRow>
    <WordStatus>
      <PageCell $w={197}><span>1 页</span><span>1 节</span><span>1/3</span></PageCell>
      <StatusCell $w={225}><span>位置 16.2厘米</span><span>28 行　33 列</span></StatusCell>
      {["录制", "修订", "扩展", "改写"].map((t) => <StatusCell key={t} $w={29} $off>{t}</StatusCell>)}
      <StatusCell $w={65}>中文(中国)</StatusCell>
      {[44, 37, 27, 29].map((w) => <StatusCell key={w} $w={w} />)}
    </WordStatus>
  </Word>
);

export default function App() {
  return (
    <Shell>
      <Global />
      <Header>
        <MainMenu>
          {mainMenu.map(([a, u, b]) => <MenuItem key={a + u + b} type="button">{a}<u>{u}</u>{b}</MenuItem>)}
          <MenuItem type="button" $end>Help</MenuItem>
        </MainMenu>
        <Brand>
          <Logo>
            <svg width="21" height="26" aria-hidden="true">
              <path d="M4 3L21 1v3zM1 9l19-2v3zM3 15l16-2v3zM0 21l18-2v4z" fill="#e01818" stroke="#e01818" />
            </svg>
            Fr
            <svg width="20" height="22" aria-label="o">
              <circle cx="10" cy="12" r="8.500" fill="#d4f0f4" stroke="#000a80" strokeWidth="2" />
              <path d="M10 8l4 4-4 4-4-4z" fill="#e01818" />
            </svg>
            ntline
          </Logo>
          <Product>Genesis 2000<em>Graphic Editor</em></Product>
          <Clock>{"17 Jun\n11:06"}</Clock>
        </Brand>
      </Header>
      <Main>
        <Side>
          <SideField>Job : 4v2210rqa0</SideField>
          <SideField>Step: cam</SideField>
          <MatrixFrame><MatrixButton type="button">Job Matrix ...</MatrixButton></MatrixFrame>
          <LayerPanel>
            {layers.map((group) => (
              <LayerGroup key={group[0][0]}>
                {group.map(([name, color, mark, swatch]) => (
                  <LayerRow key={name}>
                    <LayerCheck type="checkbox" $active={name === "bs1"} />
                    <Swatch $c={swatch ?? "#000"} />
                    <LayerName $c={color}>
                      {name}
                      {mark === "hand" && <Hand />}
                      {mark === "grid" && <svg width="5" height="5"><path d="M.5.5h4v4h-4zM.5 2.500h4M2.500.5v4" stroke="#000" fill="none" /></svg>}
                    </LayerName>
                  </LayerRow>
                ))}
              </LayerGroup>
            ))}
          </LayerPanel>
          <Spacer />
          <SideField $gold>Selected : 0</SideField>
        </Side>
        <Canvas>
          <Pcb />
          <Coords>{'X = 0.736327"\nY = 0.334578"'}</Coords>
        </Canvas>
      </Main>
      <Prompt onSubmit={(e) => e.preventDefault()}>
        <ToolButton type="button" aria-label="snap off">
          <svg width="20" height="20"><path d="M.5.5h19v19H.5zM5 5l10 10M5 8V5h3M15 12v3h-3" fill="none" stroke="#202010" /></svg>
        </ToolButton>
        <ToolButton type="button" aria-label="snap line">
          <svg width="20" height="20"><path d="M.5.5h19v19H.5zM3 17L16 4M5 4v3h2M10 14h3v2h-3zM15 13v4M17 13l-2 2 2 2" fill="none" stroke="#202010" /></svg>
        </ToolButton>
        <ToolButton type="button" $on aria-label="snap grid">
          <svg width="16" height="16"><path d="M.5.5h15v15H.5zM2.500 13.500v-7l4-4h7v11zM7.500 2.500v11M2.500 8.500h11" fill="none" stroke="#202010" /></svg>
        </ToolButton>
        <PromptLabel><span>X Y :</span><CoordInput /></PromptLabel>
        <ToolButton type="button" $on aria-label="alert">
          <svg width="16" height="17"><path d="M.5.500h15v16H.5z" fill="none" stroke="#202010" /><path d="M8 3v8M8 13v2" stroke="#202010" strokeWidth="2" /></svg>
        </ToolButton>
        <Message>&lt;M1&gt; - Select first point</Message>
        <IncFrame><IncButton type="button">Inc</IncButton></IncFrame>
      </Prompt>
      <Status>
        <StatusText>drl -&gt; bs : 0.003</StatusText>
        <StatusEdge />
        <StatusMark />
      </Status>
      <Taskbar>
        <TaskCell $pad={51}>
          <span>也用户顺科技有限公司的子平台管理系统.</span>
          <span>Leave all your disappointed to yesterday, give all your hopes to tomorrow, and so all your chance</span>
        </TaskCell>
        <TaskCell $w={101}>软键盘</TaskCell>
        <TaskCell $w={100}>影印</TaskCell>
        <TaskCell $w={76} $pad={24}>20:02:07</TaskCell>
      </Taskbar>
      <WordWindow />
      <Dock>
        <DockGrip />
        <svg width="16" height="16"><circle cx="8" cy="8" r="7" fill="#888" /><path d="M5 5l6 6M11 5l-6 6" stroke="#fff" strokeWidth="2" /></svg>
        <svg width="17" height="16"><path d="M.5 1.500h11v12H.5z" fill="#fff" stroke="#303080" /><path d="M0 1h12v3H0z" fill="#1010a0" /><path d="M2 6.500h8M2 8.500h8M2 10.500h8" stroke="#6060a0" /><path d="M9 5v9l2-2 2 3.500 1.500-1-2-3h3z" fill="#fff" stroke="#000" /></svg>
      </Dock>
      <Ime>
        <svg width="18" height="18"><rect x="1" y="1" width="16" height="16" rx="4" fill="#30b868" /><path d="M13 5.500H7q-2 0-2 1.700T7 9h4q2 0 2 1.800t-2 1.700H4.500" stroke="#fff" fill="none" strokeWidth="2.200" /></svg>
        <span>五</span>
        <svg width="14" height="14"><path d="M8 1q2 8-7 9 3 4 8 2.500T12 6q0-3-4-5z" fill="#3c80d0" /></svg>
        <svg width="10" height="14"><circle cx="3" cy="4" r="2" fill="none" stroke="#3c80d0" /><path d="M8 8v3l-2 2" stroke="#3c80d0" fill="none" strokeWidth="2" /></svg>
        <svg width="17" height="12"><path d="M.5.5h16v11H.5z" fill="#d4e8fa" stroke="#3c80d0" /><path d="M3 3.500h11M3 5.500h11M5 8.500h7" stroke="#3c80d0" strokeDasharray="2 1" /></svg>
      </Ime>
    </Shell>
  );
}
